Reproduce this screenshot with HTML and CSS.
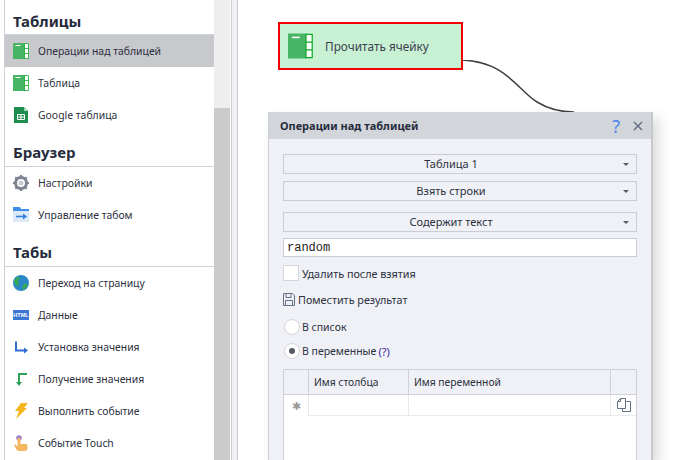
FILE: index.html
```html
<!DOCTYPE html>
<html lang="ru">
<head>
<meta charset="utf-8">
<title>Операции над таблицей</title>
<link rel="stylesheet" href="styles.css">
</head>
<body>
<svg class="defs" width="0" height="0" aria-hidden="true">
  <symbol id="sheet" viewBox="0 0 16 16">
    <rect x="0" y="0" width="12" height="16" fill="#47b565"/>
    <rect x="2.500" y="2" width="5" height="1" fill="#fff"/>
    <path d="M11.500.500h4v15h-4zM11.500 5.500h4M11.500 10.500h4" fill="#fff" stroke="#12a82c" stroke-width=".8"/>
  </symbol>
</svg>
<div class="app">
  <aside class="sidebar">
    <h2 class="group-title first">Таблицы</h2>
    <ul class="items">
      <li class="item active"><svg class="ico"><use href="#sheet"/></svg>Операции над таблицей</li>
      <li class="item"><svg class="ico"><use href="#sheet"/></svg>Таблица</li>
      <li class="item"><svg class="ico" viewBox="0 0 16 16"><path d="M1 0h10l4 4v12H1z" fill="#1e8e4e"/><path d="M11 0l4 4h-4z" fill="#a5d8b8"/><path d="M4.500 7.500h7v5h-7zM4.500 10h7M8 7.500v5" fill="none" stroke="#fff"/></svg>Google таблица</li>
    </ul>
    <h2 class="group-title">Браузер</h2>
    <ul class="items">
      <li class="item"><svg class="ico" viewBox="0 0 16 16"><circle cx="8" cy="8" r="5.500" fill="none" stroke="#7d8391" stroke-width="3"/><path d="M8 0v16M0 8h16M2.300 2.300l11.400 11.400M13.700 2.300L2.300 13.700" stroke="#7d8391" stroke-width="2.200" stroke-dasharray="3 10 3"/><circle cx="8" cy="8" r="2.500" fill="#c9ccd4"/></svg>Настройки</li>
      <li class="item"><svg class="ico" viewBox="0 0 16 16"><path d="M0 0h7l1 2h8v2H0z" fill="#3d8fe8"/><rect y="4" width="16" height="11" fill="#dbe9f8"/><path d="M3 9.500h8" stroke="#2f7fdc" stroke-width="1.600"/><path d="M10 6.500l4 3-4 3z" fill="#2f7fdc"/></svg>Управление табом</li>
    </ul>
    <h2 class="group-title">Табы</h2>
    <ul class="items">
      <li class="item"><svg class="ico" viewBox="0 0 16 16"><circle cx="8" cy="8" r="8" fill="#2a88c8"/><path d="M1 5c2-1 4-3 5-4 1 2 1 3-1 4 1 2 1 4 0 6-2 0-4-3-4-6zM11 9c2-1 3 0 4 0-1 3-3 5-5 6-1-2-1-5 1-6z" fill="#37a853"/></svg>Переход на страницу</li>
      <li class="item"><svg class="ico" viewBox="0 0 16 16"><rect y="3" width="16" height="10" fill="#3a76d4"/><text x="8" y="10.200" class="html-tag" text-anchor="middle">HTML</text></svg>Данные</li>
      <li class="item"><svg class="ico" viewBox="0 0 16 16"><path d="M3 2.500V11.500H12" fill="none" stroke="#2f6fd0" stroke-width="2"/><path d="M11 8.500l4 3-4 3z" fill="#2f6fd0"/></svg>Установка значения</li>
      <li class="item"><svg class="ico" viewBox="0 0 16 16"><path d="M14 3H6V12" fill="none" stroke="#2fa35a" stroke-width="2"/><path d="M3 11l3 4 3-4z" fill="#2fa35a"/></svg>Получение значения</li>
      <li class="item"><svg class="ico" viewBox="0 0 16 16"><path d="M8 0h7l-4 5h3L3 16l3-8H2z" fill="#f7b51d"/></svg>Выполнить событие</li>
      <li class="item"><svg class="ico" viewBox="0 0 16 16"><circle cx="6" cy="3" r="2.800" fill="#9a86cf"/><path d="M4.500 3h3v6h5.500q1.500 0 1.500 2v2q0 3-3 3H6q-2 0-3-2L1 10l1.500-.5 2 2z" fill="#f6b560"/></svg>Событие Touch</li>
    </ul>
  </aside>
  <div class="scrollbar"><div class="thumb"></div></div>
  <div class="splitter"></div>
  <main class="canvas">
    <div class="node"><svg class="node-ico"><use href="#sheet"/></svg><span>Прочитать ячейку</span></div>
    <svg class="wire" width="130" height="60" viewBox="0 0 130 60"><path d="M0 0C45 2 55 30 75 42 88 50 100 52 112 52" fill="none" stroke="#404040" stroke-width="1.500"/></svg>
    <section class="dialog">
      <header class="dlg-head">
        <span class="dlg-title">Операции над таблицей</span>
        <span class="help">?</span>
        <svg class="close" width="10" height="10" viewBox="0 0 10 10"><path d="M1 1l8 8M9 1l-8 8" stroke="#667085" stroke-width="1.500"/></svg>
      </header>
      <div class="dlg-body">
        <div class="select s-gap">Таблица 1</div>
        <div class="select s-gap-lg">Взять строки</div>
        <div class="select s-gap-sm">Содержит текст</div>
        <div class="text-input">random</div>
        <label class="check-row"><span class="checkbox"></span>Удалить после взятия</label>
        <div class="save-row"><svg class="save" width="12" height="13" viewBox="0 0 12 13"><path d="M.5.500h9l2 2v10H.5z" fill="none" stroke="#667085"/><path d="M3 .500v4h5v-4M2.500 12.500v-5h7v5" fill="none" stroke="#667085"/></svg>Поместить результат</div>
        <div class="radio-row"><span class="radio"></span>В список</div>
        <div class="radio-row second"><span class="radio on"></span>В переменные <span class="q">(?)</span></div>
        <div class="table">
          <div class="t-row t-head">
            <div class="c c0"></div><div class="c c1">Имя столбца</div><div class="c c2">Имя переменной</div><div class="c c3"></div>
          </div>
          <div class="t-row t-new">
            <div class="c c0 star">✱</div><div class="c c1"></div><div class="c c2"></div>
            <div class="c c3"><svg width="14" height="14" viewBox="0 0 14 14"><path d="M9.500 3.500h4v10h-8v-3" fill="none" stroke="#667085"/><path d="M.5 3.500l3-3h5v10h-8zM3.500.500v3h-3" fill="none" stroke="#667085"/></svg></div>
          </div>
        </div>
      </div>
    </section>
  </main>
</div>
</body>
</html>
```
FILE: styles.css
```css
* { box-sizing: border-box; }
html, body { margin: 0; height: 100%; overflow: hidden; background: #fff; }
body { font: 11px "Noto Sans", "Open Sans", sans-serif; color: #2b3040; }
.defs { position: absolute; }
.app { display: flex; height: 460px; width: 688px; padding-left: 4px; overflow: hidden; }
.sidebar { width: 210px; border-left: 1px solid #cdd0d8; background: #fff; flex: none; }
.group-title { margin: 0; height: 36px; padding: 11px 0 0 8px; font-size: 15px; line-height: 20px; font-weight: 700; color: #252b3c; border-bottom: 1px solid #cdd2dc; }
.group-title.first { height: 35px; }
.items { list-style: none; margin: 0; padding: 0; }
.item { height: 32px; display: flex; align-items: center; padding-left: 8px; font-size: 10.4px; }
.item.active { background: #c8c9cd; }
.ico { width: 16px; height: 16px; margin-right: 9px; flex: none; }
.html-tag { font: 700 5.500px "Liberation Sans", sans-serif; fill: #fff; }
.scrollbar { width: 16px; background: #eeeeef; padding-top: 108px; flex: none; }
.thumb { height: 352px; background: #cbcbcb; }
.splitter { width: 7px; flex: none; border-left: 1px solid #c8ccd4; border-right: 1px solid #c8ccd4; background: #f1f1f3; margin-left: 1px; }
.canvas { position: relative; flex: 1; background: #fff; }
.node { position: absolute; left: 40px; top: 22px; width: 185px; height: 48px; background: #c8f0d2; border: 2px solid #f00000; display: flex; align-items: center; padding-left: 8px; color: #3a4050; font-size: 11.800px; }
.node-ico { width: 25px; height: 26px; margin-right: 12px; }
.wire { position: absolute; left: 224px; top: 60px; }
.dialog { position: absolute; left: 30px; top: 112px; width: 385px; height: 348px; background: #f0f1f6; border-left: 1px solid #cdd0d8; border-right: 2px solid #c6c8cc; box-shadow: 6px 6px 12px rgba(0, 0, 0, .14); }
.dlg-head { height: 27px; background: #d2d5d9; display: flex; align-items: center; padding: 0 8px 0 11px; }
.dlg-title { flex: 1; font-weight: 700; color: #252b3c; }
.help { font-size: 18px; color: #4d86f0; margin-right: 13px; }
.close { display: block; }
.dlg-body { padding: 15px 14px 0; }
.select { position: relative; height: 20px; border: 1px solid #c9ccd4; text-align: center; line-height: 18px; padding-right: 18px; }
.select::after { content: ""; position: absolute; right: 7px; top: 8px; border: 3px solid transparent; border-top: 3px solid #555a66; border-bottom: 0; }
.s-gap { margin-bottom: 7px; }
.s-gap-lg { margin-bottom: 11px; }
.s-gap-sm { margin-bottom: 6px; }
.text-input { height: 19px; background: #fff; border: 1px solid #c9ccd4; padding-left: 3px; font: 12px/18px "Liberation Mono", monospace; color: #222; }
.check-row { display: flex; align-items: center; gap: 3px; margin-top: 8px; height: 16px; font-size: 10.800px; }
.checkbox { width: 16px; height: 16px; background: #fff; border: 1px solid #d4d6dc; }
.save-row { display: flex; align-items: center; gap: 3px; margin-top: 12px; height: 13px; font-size: 10.800px; }
.save { flex: none; }
.radio-row { display: flex; align-items: center; gap: 2px; margin-top: 13px; height: 16px; padding-left: 1px; font-size: 10.500px; }
.radio-row.second { margin-top: 8px; }
.radio { position: relative; width: 16px; height: 16px; border-radius: 50%; background: #fff; border: 1px solid #d4d6dc; }
.radio.on::after { content: ""; position: absolute; left: 4px; top: 4px; width: 6px; height: 6px; border-radius: 50%; background: #555a66; }
.q { color: #3d2a9e; font-size: 11px; }
.table { margin-top: 10px; height: 120px; background: #fff; border: 1px solid #cdd0d8; border-bottom: 0; }
.t-row { display: flex; }
.t-head { height: 25px; background: #f0f1f6; border-bottom: 1px solid #cdd0d8; font-size: 10.300px; }
.t-head .c { border-right: 1px solid #cdd0d8; }
.t-head .c:last-child { border-right: 0; }
.t-new { height: 21px; }
.t-new .c { border-bottom: 1px solid #e8e9ee; border-right: 1px solid #e8e9ee; }
.t-new .c:last-child { border-right: 0; }
.c { display: flex; align-items: center; padding-left: 5px; }
.c0 { width: 25px; flex: none; background: #f0f1f6; }
.t-new .c0 { background: #fff; border-bottom: 0; border-right: 1px solid #e8e9ee; justify-content: center; padding: 0; color: #999; font-size: 11px; }
.c1 { width: 100px; flex: none; }
.c2 { flex: 1; }
.c3 { width: 25px; flex: none; padding-left: 6px; }
```
